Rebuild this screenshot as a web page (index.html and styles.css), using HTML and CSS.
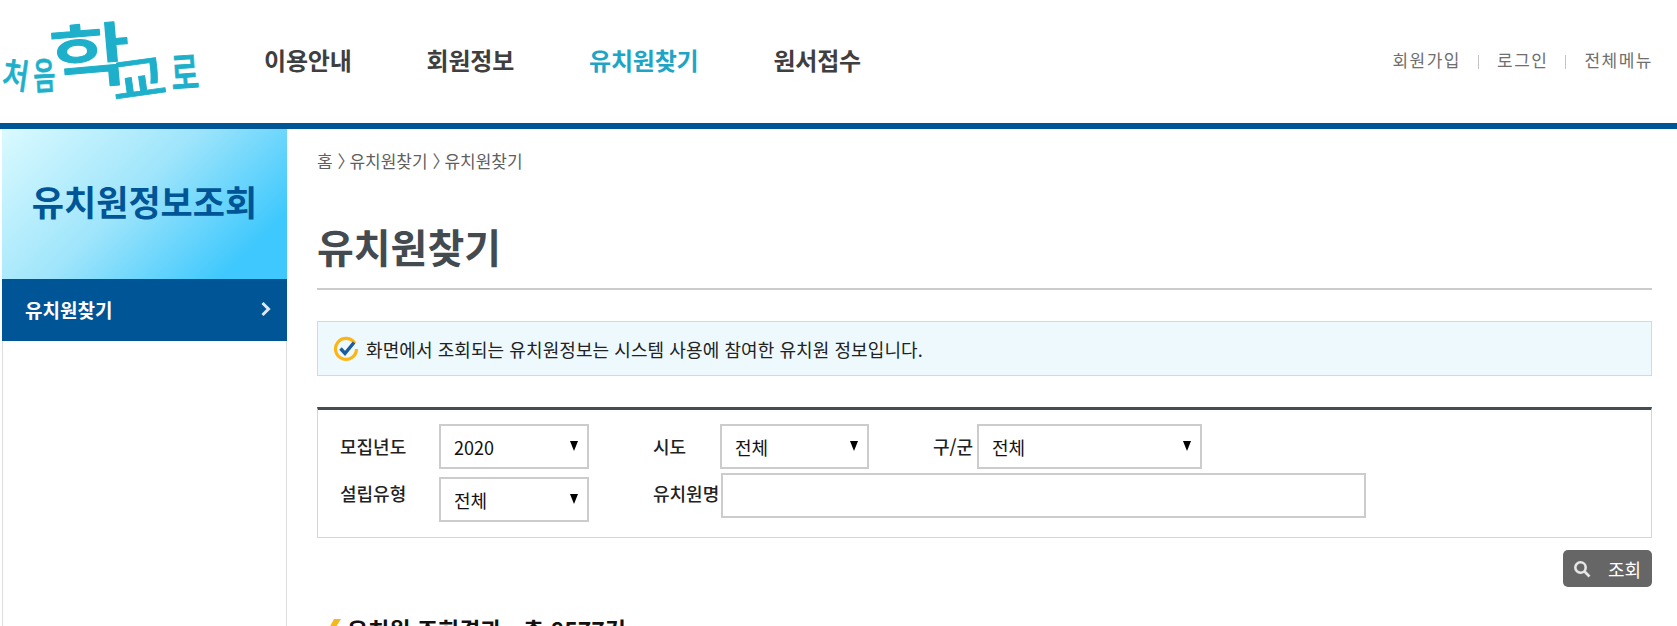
FILE: index.html
```html
<!DOCTYPE html>
<html lang="ko">
<head>
<meta charset="utf-8">
<title>유치원찾기 - 처음학교로</title>
<link rel="stylesheet" href="styles.css">
</head>
<body>
<header class="top">
  <a class="logo" href="#" aria-label="처음학교로">
    <svg width="205" height="110" viewBox="0 0 205 110">
      <g class="logo-mark">
        <text class="g-s" transform="translate(1 73) rotate(8) scale(.95 1.15)">처</text>
        <text class="g-s" transform="translate(34 77) rotate(-3) scale(.8 1.25)">음</text>
        <text class="g-l" transform="translate(52 72) rotate(-5) scale(1.3 1.02)">학</text>
        <text class="g-m" transform="translate(114 88) rotate(-8) scale(1.2 1)">교</text>
        <text class="g-r" transform="translate(172 77) rotate(-4) scale(.8 1.15)">로</text>
      </g>
    </svg>
  </a>
  <nav class="gnb">
    <a href="#">이용안내</a>
    <a href="#">회원정보</a>
    <a href="#" class="on">유치원찾기</a>
    <a href="#">원서접수</a>
  </nav>
  <div class="util">
    <a href="#">회원가입</a><i></i>
    <a href="#">로그인</a><i></i>
    <a href="#">전체메뉴</a>
  </div>
</header>
<div class="page">
  <aside class="side">
    <h2 class="side-title">유치원정보조회</h2>
    <a class="side-item" href="#">
      <span>유치원찾기</span>
      <svg width="11" height="16" viewBox="0 0 11 16"><path d="M2.5 2l6 6-6 6" fill="none" stroke="#dfe9f2" stroke-width="3"/></svg>
    </a>
  </aside>
  <main class="content">
    <p class="crumb">홈 <span class="sep">〉</span>유치원찾기 <span class="sep">〉</span>유치원찾기</p>
    <h1 class="title">유치원찾기</h1>
    <div class="notice">
      <svg width="26" height="26" viewBox="0 0 26 26">
        <path d="M22 7.5A10.500 10.500 0 1 0 23.500 13" fill="none" stroke="#fdb515" stroke-width="3.200"/>
        <path d="M7.500 12.500l4.500 5 9-11" fill="none" stroke="#1c5c9c" stroke-width="3.400"/>
      </svg>
      <span>화면에서 조회되는 유치원정보는 시스템 사용에 참여한 유치원 정보입니다.</span>
    </div>
    <form class="search">
      <div class="row">
        <label class="lb lb-a">모집년도</label>
        <div class="sel w150"><select><option>2020</option></select></div>
        <label class="lb lb-b">시도</label>
        <div class="sel w149"><select><option>전체</option></select></div>
        <label class="lb lb-c">구/군</label>
        <div class="sel w225"><select><option>전체</option></select></div>
      </div>
      <div class="row row2">
        <label class="lb lb-a">설립유형</label>
        <div class="sel w150"><select><option>전체</option></select></div>
        <label class="lb lb-b">유치원명</label>
        <input class="txt" type="text">
      </div>
    </form>
    <div class="actions">
      <button class="btn" type="button">
        <svg width="18" height="18" viewBox="0 0 18 18"><circle cx="7.500" cy="7.500" r="5.200" fill="none" stroke="#e6e6e6" stroke-width="2.600"/><path d="M11.500 11.500l5 5" stroke="#e6e6e6" stroke-width="2.600"/></svg>
        <span>조회</span>
      </button>
    </div>
    <h3 class="result">
      <svg width="16" height="20" viewBox="0 0 16 20"><path d="M9 0h7L9 11H3z" fill="#f5b81c"/><path d="M3 11h4l-4 9z" fill="#2a6fb0"/></svg>
      <span>유치원 조회결과 - 총 8577건</span>
    </h3>
  </main>
</div>
</body>
</html>
```

FILE: styles.css
```css
* { box-sizing: border-box; }
html, body { margin: 0; height: 626px; overflow: hidden; background: #fff; }
body { font-family: "Noto Sans CJK KR", "Noto Sans", sans-serif; color: #222; }
a { color: inherit; text-decoration: none; }
h1, h2, h3, p { margin: 0; }

.top { height: 123px; display: flex; align-items: flex-start; }
.logo { width: 264px; height: 110px; margin-top: 13px; display: block; flex: none; }
.logo svg { display: block; }
.logo-mark text { fill: #1eb0ca; stroke: #1eb0ca; stroke-linejoin: round; font-family: "Noto Sans CJK KR", sans-serif; font-weight: 500; }
.g-s { font-size: 30px; stroke-width: .6px; }
.g-l { font-size: 68px; stroke-width: 1px; }
.g-m { font-size: 50px; stroke-width: .8px; }
.g-r { font-size: 38px; stroke-width: .8px; }

.gnb { display: flex; gap: 75px; margin-top: 42px; font-size: 24px; line-height: 36px; font-weight: 700; color: #3f3f3f; letter-spacing: -.2px; }
.gnb .on { color: #1ea5c6; }

.util { margin-left: auto; margin-right: 24px; margin-top: 48px; display: flex; align-items: center; font-size: 17px; line-height: 24px; color: #6f6f6f; letter-spacing: 1.500px; }
.util i { width: 1px; height: 14px; background: #c4c4c4; margin: 4px 18px 0 17px; }

.page { border-top: 6px solid #005596; display: flex; height: 503px; }
.side { width: 285px; margin-left: 2px; border-left: 1px solid #ddd; border-right: 1px solid #ddd; flex: none; }
.side-title { height: 150px; margin: 0 -1px; display: flex; align-items: center; justify-content: center; padding-bottom: 8px; font-size: 35px; font-weight: 700; color: #005596; background: linear-gradient(135deg, #dafaff 0%, #9fe5fb 45%, #3ec8fd 85%); }
.side-item { height: 62px; margin: 0 -1px; background: #005596; color: #fff; font-size: 19px; font-weight: 700; display: flex; align-items: center; justify-content: space-between; padding: 0 16px 2px 23px; }

.content { margin-left: 30px; width: 1335px; flex: none; }
.crumb { margin-top: 20px; font-size: 17px; line-height: 24px; color: #5f5f5f; }
.sep { letter-spacing: -6px; margin-right: 1px; }
.title { margin-top: 44px; height: 73px; border-bottom: 2px solid #ccc; font-size: 40px; line-height: 58px; font-weight: 700; color: #444b50; }
.notice { margin-top: 31px; height: 55px; background: #eef9fd; border: 1px solid #cfdbe0; display: flex; align-items: center; gap: 7px; padding-left: 15px; font-size: 18px; letter-spacing: .08px; color: #222; }
.search { margin-top: 31px; height: 131px; border: 1px solid #d5d5d5; border-top: 3px solid #444c54; padding: 14px 0 0 22px; }
.row { display: flex; align-items: flex-start; }
.row2 { margin-top: 8px; }
.lb { font-size: 18px; line-height: 24px; font-weight: 500; color: #222; flex: none; white-space: nowrap; }
.lb-a { width: 99px; margin-top: 10px; }
.row2 .lb-a { margin-top: 4px; }
.lb-b { width: 67px; margin-left: 64px; margin-top: 10px; }
.row2 .lb-b { margin-top: 4px; }
.lb-c { width: 44px; margin-left: 64px; margin-top: 10px; }
.sel { position: relative; height: 45px; flex: none; }
.w150 { width: 150px; }
.w149 { width: 149px; }
.w225 { width: 225px; }
.sel select { appearance: none; -webkit-appearance: none; width: 100%; height: 100%; border: 2px solid #ccc; border-radius: 0; background: #fff; padding: 0 0 0 13px; font: 18px "Noto Sans CJK KR", sans-serif; color: #111; }
.sel::after { content: ""; position: absolute; right: 11px; top: 17px; border-left: 4.500px solid transparent; border-right: 4.500px solid transparent; border-top: 10px solid #000; pointer-events: none; }
.txt { width: 645px; height: 45px; border: 2px solid #ccc; margin-left: 1px; margin-top: -4px; background: #fff; flex: none; }
.actions { margin-top: 12px; display: flex; justify-content: flex-end; }
.btn { width: 89px; height: 37px; border: 0; border-radius: 5px; background: #666; color: #fff; display: flex; align-items: center; justify-content: space-between; padding: 0 11px 0 10px; font: 18px "Noto Sans CJK KR", sans-serif; }
.result { margin-top: 27px; display: flex; align-items: center; gap: 6px; padding-left: 8px; font-size: 23px; line-height: 30px; font-weight: 700; color: #111; white-space: pre; }
```
